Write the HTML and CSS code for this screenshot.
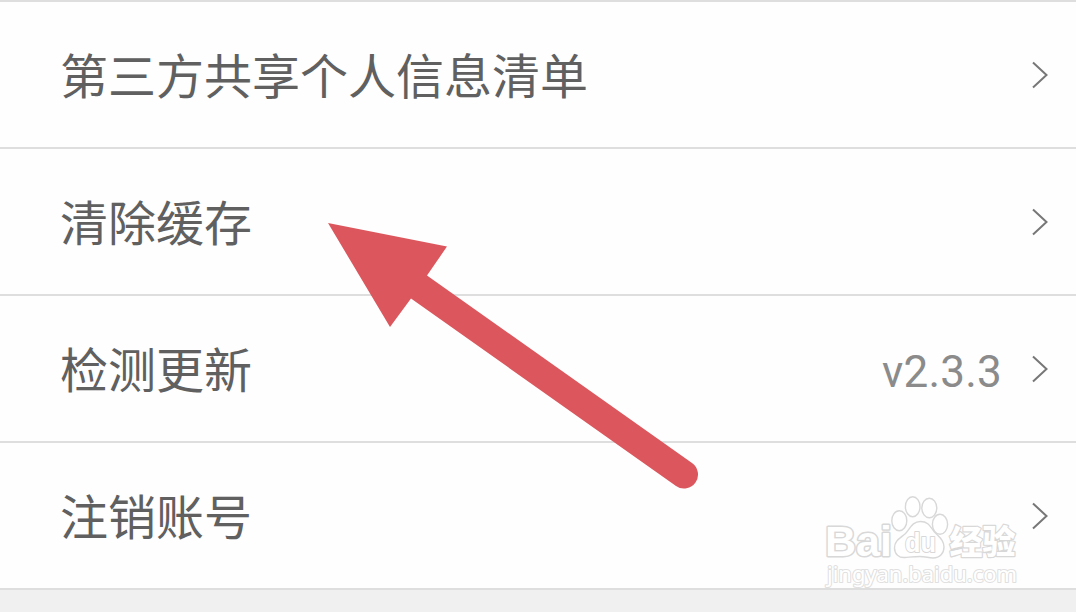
FILE: index.html
```html
<!DOCTYPE html>
<html lang="zh-CN">
<head>
<meta charset="utf-8">
<title>设置</title>
<link rel="stylesheet" href="styles.css">
</head>
<body>
<main class="screen">
  <ul class="list">
    <li class="row"><span class="label">第三方共享个人信息清单</span><svg class="chevron" viewBox="0 0 18 30"><path d="M2 2.500 15.500 15 2 27.500"/></svg></li>
    <li class="row"><span class="label">清除缓存</span><svg class="chevron" viewBox="0 0 18 30"><path d="M2 2.500 15.500 15 2 27.500"/></svg></li>
    <li class="row"><span class="label">检测更新</span><span class="value">v2.3.3</span><svg class="chevron" viewBox="0 0 18 30"><path d="M2 2.500 15.500 15 2 27.500"/></svg></li>
    <li class="row"><span class="label">注销账号</span><svg class="chevron" viewBox="0 0 18 30"><path d="M2 2.500 15.500 15 2 27.500"/></svg></li>
  </ul>
  <svg class="arrow" viewBox="0 0 380 276">
    <path d="M8 7 127 30.500 107 59.500 372 247A13.800 13.800 0 0 1 356 270L91 82.500 70 111Z"/>
  </svg>
  <svg class="watermark" viewBox="0 0 200 100">
    <text class="brand" x="3" y="66" textLength="67" lengthAdjust="spacingAndGlyphs">Bai</text>
    <g class="paw">
      <ellipse cx="77.300" cy="30.700" rx="7.500" ry="10"/>
      <ellipse cx="90.700" cy="16.700" rx="7.300" ry="10"/>
      <ellipse cx="107.300" cy="18" rx="7.500" ry="9.700"/>
      <ellipse cx="118" cy="34.300" rx="7.600" ry="10"/>
      <path d="M98.500 31.500C90 31.500 88 39 83 44 77 49 72.500 51 72.500 58 72.500 64 77 68 83 67.500 89 67 93 66.500 98 66.500 103 66.500 107 68 111 68 118 68 122 63 122 57 122 50 117 47 112.500 42 108 36 106 31.500 98.500 31.500Z"/>
    </g>
    <text class="du" x="83" y="62" textLength="31" lengthAdjust="spacingAndGlyphs">du</text>
    <text class="brand-cn" x="127.500" y="64" textLength="66" lengthAdjust="spacingAndGlyphs">经验</text>
    <text class="site" x="5" y="92" textLength="190" lengthAdjust="spacingAndGlyphs">jingyan.baidu.com</text>
  </svg>
</main>
</body>
</html>
```
FILE: styles.css
```css
body {
  margin: 0;
  background: #f0f0f0;
}

.screen {
  position: relative;
  height: 612px;
  overflow: hidden;
  font-family: "Noto Sans CJK SC", sans-serif;
}

.list {
  margin: 0;
  padding: 0;
  list-style: none;
  border-top: 2px solid #dedede;
}

.row {
  display: flex;
  align-items: center;
  box-sizing: border-box;
  height: 147px;
  padding: 0 27px 0 60px;
  background: #fefefe;
  border-bottom: 2px solid #dedede;
}

.label {
  flex: 1;
  padding-bottom: 4px;
  color: #606060;
  font-size: 48px;
  line-height: 70px;
}

.value {
  margin-right: 29px;
  padding-top: 6px;
  color: #8b8b8b;
  font-family: Roboto, sans-serif;
  font-size: 44px;
  line-height: 52px;
  letter-spacing: 0.2px;
}

.chevron {
  width: 18px;
  height: 30px;
  fill: none;
  stroke: #777;
  stroke-width: 2;
}

.arrow {
  position: absolute;
  left: 320px;
  top: 216px;
  width: 380px;
  height: 276px;
  fill: #dc575d;
}

.watermark {
  position: absolute;
  left: 822px;
  top: 490px;
  width: 200px;
  height: 100px;
  fill: #fff;
  stroke: #d8d8d8;
  stroke-width: 1.4;
}

.watermark text {
  paint-order: stroke;
  stroke-linejoin: round;
}

.watermark .brand {
  font: 700 42px/1 "Liberation Sans", sans-serif;
  stroke-width: 3;
}

.watermark .du {
  font: 700 27px/1 "Liberation Sans", sans-serif;
  stroke-width: 2;
}

.watermark .brand-cn {
  font: 900 33px/1 "Noto Sans CJK SC", sans-serif;
  stroke-width: 2.4;
}

.watermark .site {
  font: 400 21px/1 "Noto Sans", sans-serif;
  stroke: #e0e0e0;
  stroke-width: 2;
}
```
